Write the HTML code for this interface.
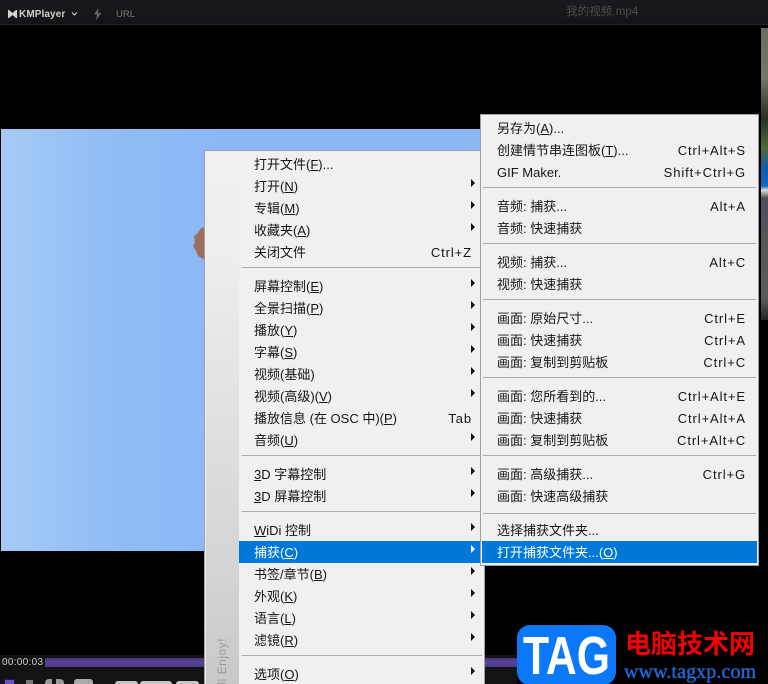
<!DOCTYPE html>
<html><head><meta charset="utf-8"><style>
html,body{margin:0;padding:0;background:#000}
#p{position:relative;width:768px;height:684px;overflow:hidden;background:#000;font-family:"Liberation Sans","Noto Sans CJK SC",sans-serif}
#p div{position:absolute}
.m{background:#f0f0f0;box-shadow:inset 0 0 0 1px #a0a0a0;z-index:2}
.i{left:0;right:0;height:22px;line-height:24px;font-size:13px;color:#151515;white-space:pre}
.i span{position:absolute;right:13px;top:0;letter-spacing:.9px}
.a .i{padding-left:50px;box-sizing:border-box}
.b .i{padding-left:17px;box-sizing:border-box}
.i u{text-underline-offset:1px}
.s{height:1px;background:#ababab}
.r{position:absolute;right:10px;top:4px;width:0;height:0;border-left:4px solid #111;border-top:4px solid transparent;border-bottom:4px solid transparent}
.h{background:#0078d7;color:#fff}
.h .r{border-left-color:#fff}
.c{background:#c6c6c6;border-radius:3px 3px 0 0}
</style></head><body><div id="p">

<div style="left:0;top:0;width:768px;height:25px;background:linear-gradient(#1a1a1e,#141417);border-bottom:1px solid #26262b;box-sizing:border-box"></div>
<svg style="position:absolute;left:8px;top:10px" width="9" height="8" viewBox="0 0 9 8"><path d="M0 0L1 0L4.5 3L8 0L9 0L9 8L8 8L4.5 5L1 8L0 8Z" fill="#d4d4d4"/></svg>
<div style="left:19px;top:8px;font-size:10px;line-height:14px;font-weight:bold;color:#d0d0d0;letter-spacing:.1px">KMPlayer</div>
<svg style="position:absolute;left:71px;top:11px" width="7" height="6" viewBox="0 0 7 6"><path d="M1 1.5L3.5 4L6 1.5" fill="none" stroke="#ddd" stroke-width="1"/></svg>
<svg style="position:absolute;left:93px;top:8px" width="9" height="12" viewBox="0 0 9 12"><path d="M5.5 0L1 6.5H4L3 12L8.5 5H5Z" fill="#666"/></svg>
<div style="left:116px;top:8px;font-size:9.5px;line-height:14px;color:#7c7c7c">URL</div>
<div style="left:566px;top:5px;font-size:11.5px;line-height:15px;color:#4e4e4e;letter-spacing:.1px">我的视频.mp4</div>

<div style="left:1px;top:129px;width:480px;height:422px;background:linear-gradient(90deg,#a5cbf5 0,#92bdf5 100px,#8ab8f7 230px,#8ab8f7 480px)"></div>
<svg style="position:absolute;left:191px;top:225px" width="16" height="36" viewBox="0 0 16 36"><path d="M16 2L10 3L7 8L3 11L4 17L2 21L5 26L7 31L12 34L16 34Z" fill="#9b6f5e"/></svg>
<div style="left:761px;top:28px;width:7px;height:292px;background:linear-gradient(#6b6b66 0,#77756c 50px,#2b2e28 90px,#4e6a3c 120px,#0f5cb0 140px,#1469c0 158px,#ddd 162px,#4d5155 170px,#5a5d60 270px,#26241e 292px)"></div>

<div style="left:0;top:655px;width:768px;height:29px;background:#131316"></div>
<div style="left:2px;top:657px;font-size:10px;line-height:12px;color:#cfcfcf;letter-spacing:.3px">00:00:03</div>
<div style="left:45px;top:658px;width:472px;height:9px;background:linear-gradient(#47367c,#5c459a 50%,#4a3880)"></div>
<div style="left:5px;top:680px;width:9px;height:4px;background:#6a4fd0;box-shadow:0 0 0 1px #221a40"></div>
<div style="left:26px;top:680px;width:7px;height:4px;background:#777"></div>
<div style="left:45px;top:679px;width:7px;height:5px;background:#999;border-radius:4px 0 0 0"></div>
<div style="left:56px;top:679px;width:8px;height:5px;background:#999;border-radius:0 4px 0 0"></div>
<div style="left:74px;top:679px;width:19px;height:5px;background:#aaa;border-radius:3px 3px 0 0"></div>
<div class="c" style="left:115px;top:681px;width:23px;height:3px"></div>
<div class="c" style="left:140px;top:681px;width:32px;height:3px"></div>
<div class="c" style="left:176px;top:681px;width:23px;height:3px"></div>

<div class="m a" style="left:204px;top:150px;width:281px;height:540px">
<div style="left:2px;top:1px;width:33px;height:538px;background:linear-gradient(#f0f0f0 0,#eeeeee 100px,#d4d4d4 420px,#c8c8c8 538px)"></div>
<div style="left:3px;top:491px;height:60px;width:30px;overflow:visible"><div style="left:-17px;top:22px;width:64px;height:14px;transform:rotate(-90deg);font-size:12px;line-height:14px;color:#9a9a9a;letter-spacing:.5px;white-space:nowrap;text-align:right">All Enjoy!</div></div>
<div class="i" style="top:3px">打开文件(<u>F</u>)...</div>
<div class="i" style="top:25px">打开(<u>N</u>)<b class="r"></b></div>
<div class="i" style="top:47px">专辑(<u>M</u>)<b class="r"></b></div>
<div class="i" style="top:69px">收藏夹(<u>A</u>)<b class="r"></b></div>
<div class="i" style="top:91px">关闭文件<span>Ctrl+Z</span></div>
<div class="s" style="left:38px;right:3px;top:117px"></div>
<div class="i" style="top:125px">屏幕控制(<u>E</u>)<b class="r"></b></div>
<div class="i" style="top:147px">全景扫描(<u>P</u>)<b class="r"></b></div>
<div class="i" style="top:169px">播放(<u>Y</u>)<b class="r"></b></div>
<div class="i" style="top:191px">字幕(<u>S</u>)<b class="r"></b></div>
<div class="i" style="top:213px">视频(基础)<b class="r"></b></div>
<div class="i" style="top:235px">视频(高级)(<u>V</u>)<b class="r"></b></div>
<div class="i" style="top:257px">播放信息 (在 OSC 中)(<u>P</u>)<span>Tab</span></div>
<div class="i" style="top:279px">音频(<u>U</u>)<b class="r"></b></div>
<div class="s" style="left:38px;right:3px;top:305px"></div>
<div class="i" style="top:313px"><u>3</u>D 字幕控制<b class="r"></b></div>
<div class="i" style="top:335px"><u>3</u>D 屏幕控制<b class="r"></b></div>
<div class="s" style="left:38px;right:3px;top:361px"></div>
<div class="i" style="top:369px"><u>W</u>iDi 控制<b class="r"></b></div>
<div class="i h" style="top:391px;left:35px;padding-left:15px">捕获(<u>C</u>)<b class="r"></b></div>
<div class="i" style="top:413px">书签/章节(<u>B</u>)<b class="r"></b></div>
<div class="i" style="top:435px">外观(<u>K</u>)<b class="r"></b></div>
<div class="i" style="top:457px">语言(<u>L</u>)<b class="r"></b></div>
<div class="i" style="top:479px">滤镜(<u>R</u>)<b class="r"></b></div>
<div class="s" style="left:38px;right:3px;top:505px"></div>
<div class="i" style="top:513px">选项(<u>O</u>)<b class="r"></b></div>
</div>

<div class="m b" style="left:480px;top:114px;width:279px;height:452px;z-index:3">
<div class="i" style="top:3px">另存为(<u>A</u>)...</div>
<div class="i" style="top:25px">创建情节串连图板(<u>T</u>)...<span>Ctrl+Alt+S</span></div>
<div class="i" style="top:47px">GIF Maker.<span>Shift+Ctrl+G</span></div>
<div class="s" style="left:3px;right:3px;top:73px"></div>
<div class="i" style="top:81px">音频: 捕获...<span>Alt+A</span></div>
<div class="i" style="top:103px">音频: 快速捕获</div>
<div class="s" style="left:3px;right:3px;top:129px"></div>
<div class="i" style="top:137px">视频: 捕获...<span>Alt+C</span></div>
<div class="i" style="top:159px">视频: 快速捕获</div>
<div class="s" style="left:3px;right:3px;top:185px"></div>
<div class="i" style="top:193px">画面: 原始尺寸...<span>Ctrl+E</span></div>
<div class="i" style="top:215px">画面: 快速捕获<span>Ctrl+A</span></div>
<div class="i" style="top:237px">画面: 复制到剪贴板<span>Ctrl+C</span></div>
<div class="s" style="left:3px;right:3px;top:263px"></div>
<div class="i" style="top:271px">画面: 您所看到的...<span>Ctrl+Alt+E</span></div>
<div class="i" style="top:293px">画面: 快速捕获<span>Ctrl+Alt+A</span></div>
<div class="i" style="top:315px">画面: 复制到剪贴板<span>Ctrl+Alt+C</span></div>
<div class="s" style="left:3px;right:3px;top:341px"></div>
<div class="i" style="top:349px">画面: 高级捕获...<span>Ctrl+G</span></div>
<div class="i" style="top:371px">画面: 快速高级捕获</div>
<div class="s" style="left:3px;right:3px;top:399px"></div>
<div class="i" style="top:405px">选择捕获文件夹...</div>
<div class="i h" style="top:427px;left:2px;right:2px;padding-left:15px">打开捕获文件夹...(<u>O</u>)</div>
</div>

<div style="left:517px;top:625px;width:251px;height:59px;background:#000;z-index:4"></div>
<div style="left:517px;top:625px;width:99px;height:60px;background:#0a78f8;border-radius:13px;z-index:5"></div>
<svg style="position:absolute;left:517px;top:625px;z-index:6" width="99" height="59" viewBox="0 0 99 59"><text x="6" y="49" font-family="Liberation Sans" font-weight="bold" font-size="54" fill="#fff" textLength="87" lengthAdjust="spacingAndGlyphs">TAG</text></svg>
<div style="left:625px;top:628px;font-size:26px;line-height:30px;font-weight:bold;color:#f40000;z-index:5;white-space:nowrap;font-family:'Noto Sans CJK SC',sans-serif">电脑技术网</div>
<div style="left:624px;top:662px;font-family:'Liberation Serif',serif;font-size:20px;line-height:20px;color:#1f6fe0;-webkit-text-stroke:.3px #1f6fe0;z-index:5;white-space:nowrap;letter-spacing:.1px">www.tagxp.com</div>

</div></body></html>
